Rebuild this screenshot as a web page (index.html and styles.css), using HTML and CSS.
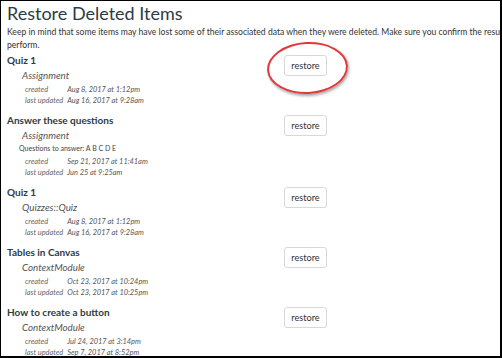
FILE: index.html
```html
<!DOCTYPE html>
<html>
<head>
<meta charset="utf-8">
<link rel="stylesheet" href="styles.css">
</head>
<body>
<div class="frame">
  <h1 class="title">Restore Deleted Items</h1>
  <p class="intro">Keep in mind that some items may have lost some of their associated data when they were deleted. Make sure you confirm the results of any restore you perform.</p>
  <ul class="items">
    <li class="item">
      <div class="info">
        <div class="name">Quiz 1</div>
        <div class="type">Assignment</div>
        <div class="meta">
          <span class="label">created</span><span class="date">Aug 8, 2017 at 1:12pm</span>
          <span class="label">last updated</span><span class="date">Aug 16, 2017 at 9:28am</span>
        </div>
      </div>
      <div class="actions"><button class="restore">restore</button><span class="highlight"></span></div>
    </li>
    <li class="item">
      <div class="info">
        <div class="name">Answer these questions</div>
        <div class="type">Assignment</div>
        <div class="extra">Questions to answer: A B C D E</div>
        <div class="meta">
          <span class="label">created</span><span class="date">Sep 21, 2017 at 11:41am</span>
          <span class="label">last updated</span><span class="date">Jun 25 at 9:25am</span>
        </div>
      </div>
      <div class="actions"><button class="restore">restore</button></div>
    </li>
    <li class="item">
      <div class="info">
        <div class="name">Quiz 1</div>
        <div class="type">Quizzes::Quiz</div>
        <div class="meta">
          <span class="label">created</span><span class="date">Aug 8, 2017 at 1:12pm</span>
          <span class="label">last updated</span><span class="date">Aug 16, 2017 at 9:28am</span>
        </div>
      </div>
      <div class="actions"><button class="restore">restore</button></div>
    </li>
    <li class="item">
      <div class="info">
        <div class="name">Tables in Canvas</div>
        <div class="type">ContextModule</div>
        <div class="meta">
          <span class="label">created</span><span class="date">Oct 23, 2017 at 10:24pm</span>
          <span class="label">last updated</span><span class="date">Oct 23, 2017 at 10:25pm</span>
        </div>
      </div>
      <div class="actions"><button class="restore">restore</button></div>
    </li>
    <li class="item">
      <div class="info">
        <div class="name">How to create a button</div>
        <div class="type">ContextModule</div>
        <div class="meta">
          <span class="label">created</span><span class="date">Jul 24, 2017 at 3:14pm</span>
          <span class="label">last updated</span><span class="date">Sep 7, 2017 at 8:52pm</span>
        </div>
      </div>
      <div class="actions"><button class="restore">restore</button></div>
    </li>
  </ul>
</div>
</body>
</html>
```
FILE: styles.css
```css
html, body {
  margin: 0;
  padding: 0;
  background: #fff;
}
.frame {
  box-sizing: border-box;
  width: 502px;
  height: 358px;
  border-top: 1px solid #000;
  border-left: 1px solid #000;
  border-right: 2px solid #000;
  border-bottom: 2px solid #000;
  overflow: hidden;
  padding: 0 0 0 6px;
  font-family: Lato, "Noto Sans", sans-serif;
  color: #333;
}
.title {
  margin: 0;
  font-size: 18px;
  font-weight: 400;
  line-height: 25px;
  color: #2d3b45;
}
.intro {
  margin: 0;
  width: 600px;
  font-size: 8.6px;
  line-height: 13px;
  color: #333;
}
.items {
  list-style: none;
  margin: 1px 0 0;
  padding: 0;
}
.item {
  display: flex;
  margin-bottom: 7px;
}
.info {
  width: 277px;
}
.name {
  font-weight: 700;
  font-size: 10px;
  line-height: 14px;
  color: #2d3b45;
}
.type {
  margin: 1px 0 0 15px;
  font-style: italic;
  font-size: 9.8px;
  line-height: 14px;
  color: #555;
}
.extra {
  margin: 0 0 0 12px;
  font-size: 7px;
  line-height: 12px;
  color: #444;
}
.meta {
  display: grid;
  grid-template-columns: auto auto;
  justify-content: start;
  column-gap: 4px;
  margin: 2px 0 0 18px;
  font-style: italic;
  font-size: 7.4px;
  line-height: 11px;
  color: #555;
}
.label {
  white-space: nowrap;
  color: #666;
}
.date {
  white-space: nowrap;
}
.actions {
  position: relative;
  padding-top: 2px;
}
.restore {
  display: block;
  width: 43px;
  height: 21px;
  padding: 0;
  border: 1px solid #d8d8d8;
  border-radius: 3px;
  background: #fff;
  font-family: Lato, "Noto Sans", sans-serif;
  font-size: 9.2px;
  color: #333;
}
.highlight {
  position: absolute;
  box-sizing: border-box;
  left: -17px;
  top: -11px;
  width: 81px;
  height: 52px;
  border: 2px solid #e2383c;
  border-radius: 50%;
  transform: rotate(-3deg);
  box-shadow: 1px 2px 3px rgba(0, 0, 0, 0.35);
}
```
